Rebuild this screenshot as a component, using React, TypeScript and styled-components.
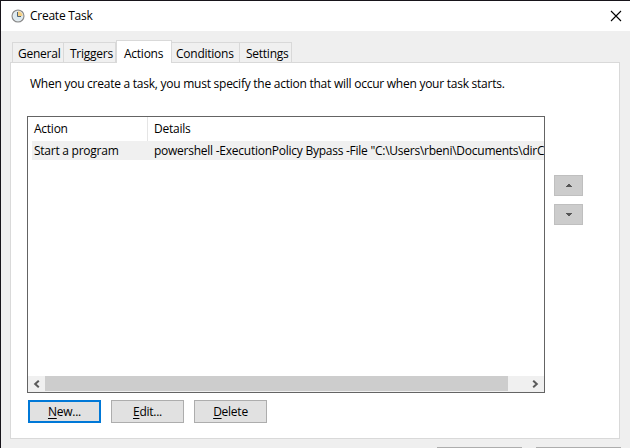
import React from 'react';
import styled, { createGlobalStyle } from 'styled-components';

const GlobalStyle = createGlobalStyle`
  *, *::before, *::after { box-sizing: border-box; }
  body { margin: 0; overflow: hidden; background: #efefef; }
`;

const Window = styled.main`
  width: 630px;
  height: 448px;
  overflow: hidden;
  display: flex;
  flex-direction: column;
  background: #efefef;
  border-top: 1px solid #17141a;
  border-left: 1px solid #17141a;
  color: #000;
  font-family: 'Open Sans', 'Noto Sans', sans-serif;
  font-size: 12px;
  line-height: 16px;
`;

const Label = styled.span<{ $spacing?: number }>`
  display: block;
  white-space: pre;
  letter-spacing: ${({ $spacing = -0.25 }) => $spacing}px;
`;

const TitleBar = styled.header`
  flex: none;
  height: 30px;
  display: flex;
  align-items: center;
  background: #fff;
  padding: 0 8px 0 10px;
  gap: 5px;
`;

const CloseButton = styled.button`
  margin-left: auto;
  width: 12px;
  height: 12px;
  padding: 0;
  border: 0;
  background: none;
  display: flex;
`;

const TabStrip = styled.nav`
  flex: none;
  height: 31px;
  display: flex;
  align-items: flex-end;
  padding-left: 11px;
`;

const Tab = styled.button<{ $width: number; $active?: boolean; $first?: boolean; $indent: number }>`
  flex: none;
  position: relative;
  width: ${({ $width }) => $width}px;
  height: ${({ $active }) => ($active ? 23 : 20)}px;
  margin-bottom: ${({ $active }) => ($active ? -1 : 0)}px;
  padding: ${({ $active }) => ($active ? '3px' : '2px')} 0 0 ${({ $indent }) => $indent}px;
  border: 1px solid #d9d9d9;
  border-bottom: 0;
  border-left-width: ${({ $active, $first }) => ($active || $first ? 1 : 0)}px;
  border-right-width: ${({ $width, $active }) => ($active || $width ? 1 : 0)}px;
  background: ${({ $active }) => ($active ? '#fff' : '#f0f0f0')};
  color: inherit;
  font: inherit;
  text-align: left;
  display: block;
`;

const Panel = styled.section`
  flex: none;
  width: 610px;
  height: 377px;
  margin-left: 9px;
  border: 1px solid #d9d9d9;
  background: #fff;
  display: flex;
  flex-direction: column;
  padding: 13px 0 0 16px;
`;

const Intro = styled.div`
  height: 40px;
  padding-left: 3px;
`;

const Content = styled.div`
  display: flex;
  gap: 9px;
`;

const ListView = styled.div`
  width: 518px;
  height: 277px;
  border: 1px solid #646464;
  display: flex;
  flex-direction: column;
`;

const HeaderRow = styled.div`
  height: 24px;
  display: grid;
  grid-template-columns: 120px 1fr;
`;

const HeaderCell = styled.div`
  padding: 4px 0 0 6px;
  border-right: 1px solid #e5e5e5;
  &:last-child { border-right: 0; }
`;

const Row = styled.div`
  height: 19px;
  margin-left: 4px;
  background: #f0f0f0;
  display: grid;
  grid-template-columns: 120px 1fr;
  overflow: hidden;
`;

const Cell = styled.div`
  padding: 2px 0 0 2px;
  min-width: 0;
`;

const ScrollBar = styled.div`
  height: 16px;
  margin-top: auto;
  display: flex;
  justify-content: space-between;
  background: #f0f0f0;
`;

const ScrollThumb = styled.div`
  width: 463px;
  height: 15px;
  margin-right: 19px;
  background: #cdcdcd;
`;

const ScrollArrow = styled.div`
  width: 17px;
  height: 15px;
  display: flex;
  align-items: center;
  justify-content: center;
`;

const OrderButtons = styled.div`
  display: flex;
  flex-direction: column;
  gap: 8px;
  padding-top: 59px;
`;

const OrderButton = styled.button`
  width: 29px;
  height: 21px;
  padding: 0;
  border: 1px solid #bfbfbf;
  background: #ccc;
  display: flex;
  align-items: center;
  justify-content: center;
`;

const ButtonBar = styled.div`
  display: flex;
  gap: 10px;
  padding: 7px 0 0 1px;
`;

const PushButton = styled.button<{ $primary?: boolean }>`
  width: 73px;
  height: 23px;
  padding: 0;
  border: ${({ $primary }) => ($primary ? '2px solid #0078d7' : '1px solid #adadad')};
  background: #e1e1e1;
  color: inherit;
  font: inherit;
  display: flex;
  align-items: center;
  justify-content: center;
`;

const Mnemonic = styled.span`
  text-decoration: underline;
  text-decoration-thickness: 1px;
  text-underline-offset: 2px;
`;

const Footer = styled.footer`
  flex: none;
  height: 1px;
  margin-top: 8px;
  display: flex;
  gap: 14px;
  padding-left: 436px;
`;

const FooterButton = styled.div`
  width: 85px;
  border-top: 1px solid #adadad;
`;

const ClockIcon = () => (
  <svg width="14" height="14" viewBox="0 0 14 14">
    <circle cx="7" cy="7" r="5.9" fill="#dce9f0" stroke="#8b8b8b" strokeWidth="1.3" />
    <path d="M7 7V2A5 5 0 0 1 12 7Z" fill="#f5cf82" />
    <circle cx="7" cy="7" r="4.9" fill="none" stroke="#e9eef0" strokeWidth=".6" />
    <path d="M6.5 3V7.5H10" fill="none" stroke="#4f6374" />
  </svg>
);

const CloseIcon = () => (
  <svg width="12" height="12" viewBox="0 0 12 12">
    <path d="M1 1L11 11M11 1L1 11" stroke="#000" strokeWidth="1.1" />
  </svg>
);

const Chevron = ({ right = false }: { right?: boolean }) => (
  <svg width="7" height="8" viewBox="0 0 7 8">
    <path d={right ? 'M1.2 .7L4.8 4L1.2 7.3' : 'M5.8 .7L2.2 4L5.8 7.3'} fill="none" stroke="#5b5b5b" strokeWidth="2" />
  </svg>
);

const Triangle = ({ down = false }: { down?: boolean }) => (
  <svg width="6" height="3" viewBox="0 0 6 3" shapeRendering="crispEdges">
    <path d={down ? 'M0 0H6V1H5V2H4V3H2V2H1V1H0Z' : 'M2 0H4V1H5V2H6V3H0V2H1V1H2Z'} fill="#555" />
  </svg>
);

const tabs = [
  { name: 'General', width: 52, indent: 5, spacing: -0.25 },
  { name: 'Triggers', width: 52, indent: 6, spacing: -0.25 },
  { name: 'Actions', width: 56, indent: 7, spacing: -0.25, active: true },
  { name: 'Conditions', width: 68, indent: 4, spacing: -0.25 },
  { name: 'Settings', width: 52, indent: 6, spacing: -0.25 },
];

const actions = [
  { key: 'N', rest: 'ew...', spacing: -0.25, primary: true },
  { key: 'E', rest: 'dit...', spacing: -0.25 },
  { key: 'D', rest: 'elete', spacing: -0.25 },
];

export default function App() {
  return (
    <>
      <GlobalStyle />
      <Window>
        <TitleBar>
          <ClockIcon />
          <Label>Create Task</Label>
          <CloseButton aria-label="Close"><CloseIcon /></CloseButton>
        </TitleBar>
        <TabStrip>
          {tabs.map((t, i) => (
            <Tab key={t.name} $width={t.width} $indent={t.indent} $active={t.active} $first={i === 0}>
              <Label $spacing={t.spacing}>{t.name}</Label>
            </Tab>
          ))}
        </TabStrip>
        <Panel>
          <Intro>
            <Label>When you create a task, you must specify the action that will occur when your task starts.</Label>
          </Intro>
          <Content>
            <ListView>
              <HeaderRow>
                <HeaderCell><Label>Action</Label></HeaderCell>
                <HeaderCell><Label>Details</Label></HeaderCell>
              </HeaderRow>
              <Row>
                <Cell><Label>Start a program</Label></Cell>
                <Cell><Label>{'powershell -ExecutionPolicy Bypass -File "C:\\Users\\rbeni\\Documents\\dirC'}</Label></Cell>
              </Row>
              <ScrollBar>
                <ScrollArrow><Chevron /></ScrollArrow>
                <ScrollThumb />
                <ScrollArrow><Chevron right /></ScrollArrow>
              </ScrollBar>
            </ListView>
            <OrderButtons>
              <OrderButton aria-label="Move up"><Triangle /></OrderButton>
              <OrderButton aria-label="Move down"><Triangle down /></OrderButton>
            </OrderButtons>
          </Content>
          <ButtonBar>
            {actions.map((a) => (
              <PushButton key={a.key} $primary={a.primary}>
                <Label $spacing={a.spacing}><Mnemonic>{a.key}</Mnemonic>{a.rest}</Label>
              </PushButton>
            ))}
          </ButtonBar>
        </Panel>
        <Footer>
          <FooterButton />
          <FooterButton />
        </Footer>
      </Window>
    </>
  );
}
